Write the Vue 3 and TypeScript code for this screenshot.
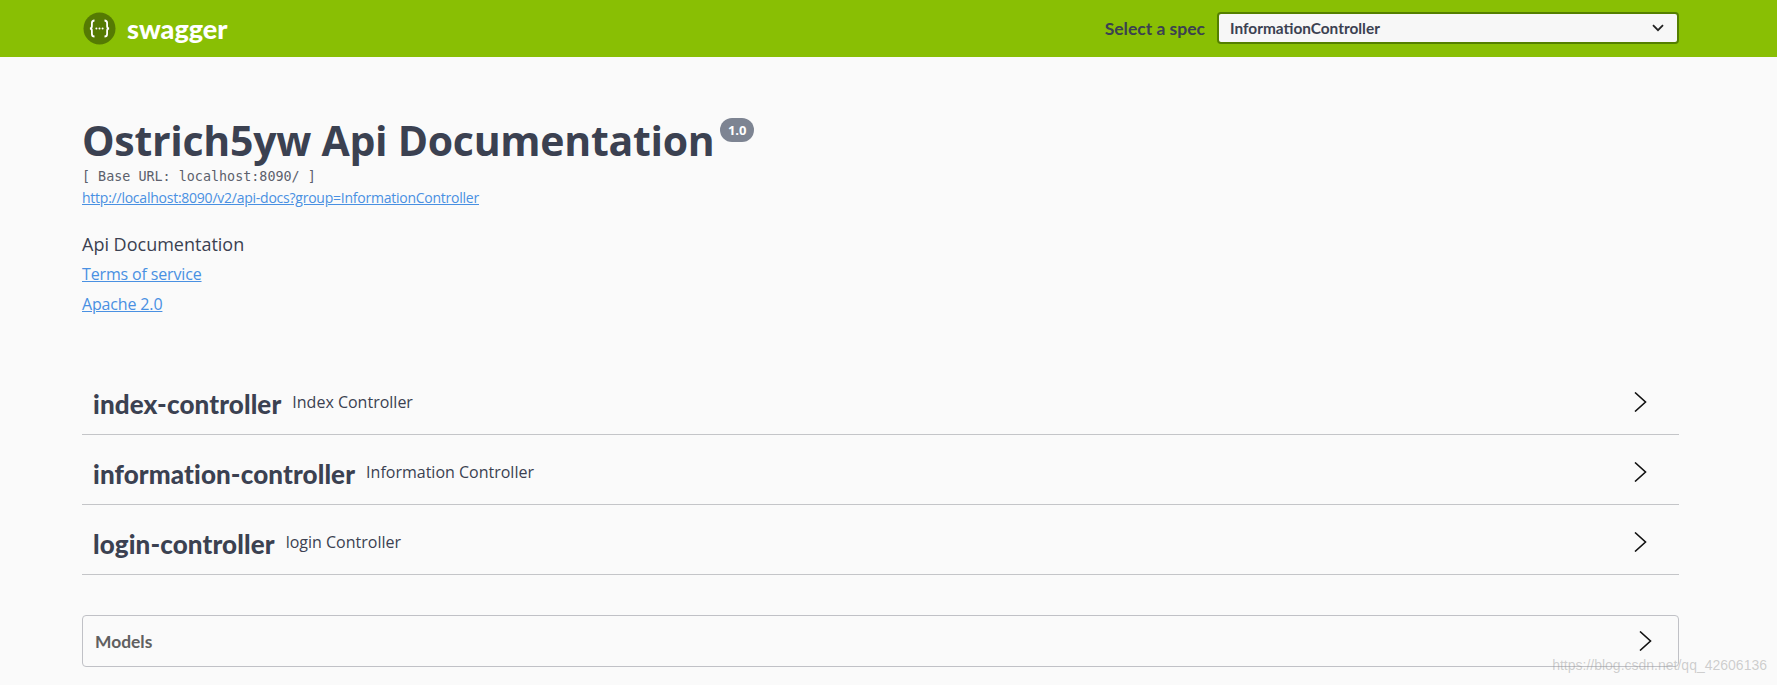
<script setup lang="ts">
const tags = [
  { name: 'index-controller', desc: 'Index Controller' },
  { name: 'information-controller', desc: 'Information Controller' },
  { name: 'login-controller', desc: 'login Controller' }
]
</script>

<template>
  <div class="page">
    <header class="topbar">
      <div class="topbar-inner">
        <a class="logo">
          <svg class="logo-icon" width="33" height="33" viewBox="0 0 33 33">
            <circle cx="16.5" cy="16.5" r="16" fill="#557a03" />
            <path
              d="M11.5 8.5c-2.2 0-2.6 1-2.6 2.6v3.2c0 1.3-.7 2.2-2 2.2 1.3 0 2 .9 2 2.2v3.2c0 1.6.4 2.6 2.6 2.6M21.5 8.5c2.2 0 2.6 1 2.6 2.6v3.2c0 1.3.7 2.2 2 2.2-1.3 0-2 .9-2 2.2v3.2c0 1.6-.4 2.6-2.6 2.6"
              fill="none"
              stroke="#fff"
              stroke-width="1.8"
            />
            <circle cx="13.4" cy="16.5" r="1" fill="#fff" />
            <circle cx="16.5" cy="16.5" r="1" fill="#fff" />
            <circle cx="19.6" cy="16.5" r="1" fill="#fff" />
          </svg>
          <span class="logo-text">swagger</span>
        </a>
        <div class="spec">
          <span class="spec-label">Select a spec</span>
          <div class="spec-select">
            <span>InformationController</span>
            <svg width="12" height="8" viewBox="0 0 12 8">
              <path d="M1 1.2l5 5 5-5" fill="none" stroke="#222" stroke-width="1.8" />
            </svg>
          </div>
        </div>
      </div>
    </header>

    <main class="wrap">
      <section class="info">
        <div class="title-row">
          <h2 class="title">Ostrich5yw Api Documentation</h2>
          <span class="version">1.0</span>
        </div>
        <div class="base-url">[ Base URL: localhost:8090/ ]</div>
        <a class="link spec-link">http://localhost:8090/v2/api-docs?group=InformationController</a>
        <p class="desc">Api Documentation</p>
        <div class="info-link"><a class="link">Terms of service</a></div>
        <div class="info-link"><a class="link">Apache 2.0</a></div>
      </section>

      <section class="tags">
        <div v-for="tag in tags" :key="tag.name" class="tag-row">
          <span class="tag-name">{{ tag.name }}</span>
          <span class="tag-desc">{{ tag.desc }}</span>
          <svg class="arrow" width="20" height="20" viewBox="0 0 20 20">
            <path d="M5 .5L15.5 10 5 19.5" fill="none" stroke="#111" stroke-width="1.6" />
          </svg>
        </div>
      </section>

      <section class="models">
        <span class="models-title">Models</span>
        <svg class="arrow" width="20" height="20" viewBox="0 0 20 20">
          <path d="M5 .5L15.5 10 5 19.5" fill="none" stroke="#111" stroke-width="1.6" />
        </svg>
      </section>
    </main>

    <div class="watermark">https://blog.csdn.net/qq_42606136</div>
  </div>
</template>

<style scoped>
.page {
  position: relative;
  height: 685px;
  overflow: hidden;
  background: #fafafa;
  font-family: "Open Sans", sans-serif;
  color: #3b4151;
}

.topbar {
  height: 57px;
  background: #89bf04;
}

.topbar-inner {
  box-sizing: border-box;
  height: 100%;
  padding: 0 98px 1px 83px;
  display: flex;
  align-items: center;
  justify-content: space-between;
}

.logo {
  display: flex;
  align-items: center;
  gap: 11px;
}

.logo-icon {
  flex: none;
}

.logo-text {
  font-family: Lato, sans-serif;
  font-weight: 900;
  font-size: 27px;
  color: #fff;
}

.spec {
  display: flex;
  align-items: center;
  gap: 12px;
}

.spec-label {
  font-family: Lato, sans-serif;
  font-weight: 700;
  font-size: 17.5px;
  color: #3b4151;
}

.spec-select {
  box-sizing: border-box;
  width: 462px;
  height: 32px;
  padding: 0 13px 0 11px;
  display: flex;
  align-items: center;
  justify-content: space-between;
  background: #f7f7f7;
  border: 2px solid #547f00;
  border-radius: 4px;
  font-family: Lato, sans-serif;
  font-weight: 700;
  font-size: 15.4px;
}

.wrap {
  padding: 0 98px 0 82px;
}

.info {
  padding-top: 59px;
}

.title-row {
  display: flex;
  align-items: flex-start;
}

.title {
  margin: -1px 0 1px;
  font-size: 41px;
  line-height: 50px;
  letter-spacing: -0.28px;
  font-weight: 700;
}

.version {
  margin: 2px 0 0 6px;
  padding: 0 7.5px;
  height: 24px;
  line-height: 24px;
  border-radius: 12px;
  background: #7d8492;
  color: #fff;
  font-size: 13px;
  font-weight: 700;
}

.base-url {
  margin-top: 3px;
  font-family: "DejaVu Sans Mono", monospace;
  font-size: 13.4px;
  line-height: 16px;
  color: #5c606c;
}

.link {
  color: #4990e2;
  text-decoration: underline;
}

.spec-link {
  display: block;
  margin-top: 3px;
  font-size: 14px;
  line-height: 19px;
  letter-spacing: -0.24px;
}

.desc {
  margin: 26px 0 0;
  font-size: 18px;
  line-height: 22px;
}

.info-link {
  margin-top: 8px;
  font-size: 16px;
  line-height: 22px;
  letter-spacing: -0.15px;
}

.tags {
  margin-top: 50px;
}

.tag-row {
  box-sizing: border-box;
  height: 70px;
  padding: 5px 29px 0 11px;
  display: flex;
  align-items: center;
  border-bottom: 1px solid #c4c5c8;
}

.tag-name {
  margin-top: 4px;
  font-family: Lato, sans-serif;
  font-weight: 900;
  font-size: 26px;
  letter-spacing: 0.12px;
}

.tag-desc {
  margin-left: 11px;
  margin-bottom: 1px;
  font-size: 16px;
}

.arrow {
  margin-left: auto;
}

.models {
  box-sizing: border-box;
  margin-top: 40px;
  height: 52px;
  padding: 0 23px 0 12px;
  display: flex;
  align-items: center;
  border: 1px solid #c0c1c6;
  border-radius: 4px;
}

.models-title {
  font-family: Lato, sans-serif;
  font-weight: 700;
  font-size: 17.4px;
  color: #606060;
}

.watermark {
  position: absolute;
  right: 10px;
  bottom: 12px;
  font-family: "Liberation Sans", sans-serif;
  font-size: 14px;
  color: rgba(150, 150, 150, 0.45);
}
</style>

<style>
body {
  background: #fafafa;
}
</style>
